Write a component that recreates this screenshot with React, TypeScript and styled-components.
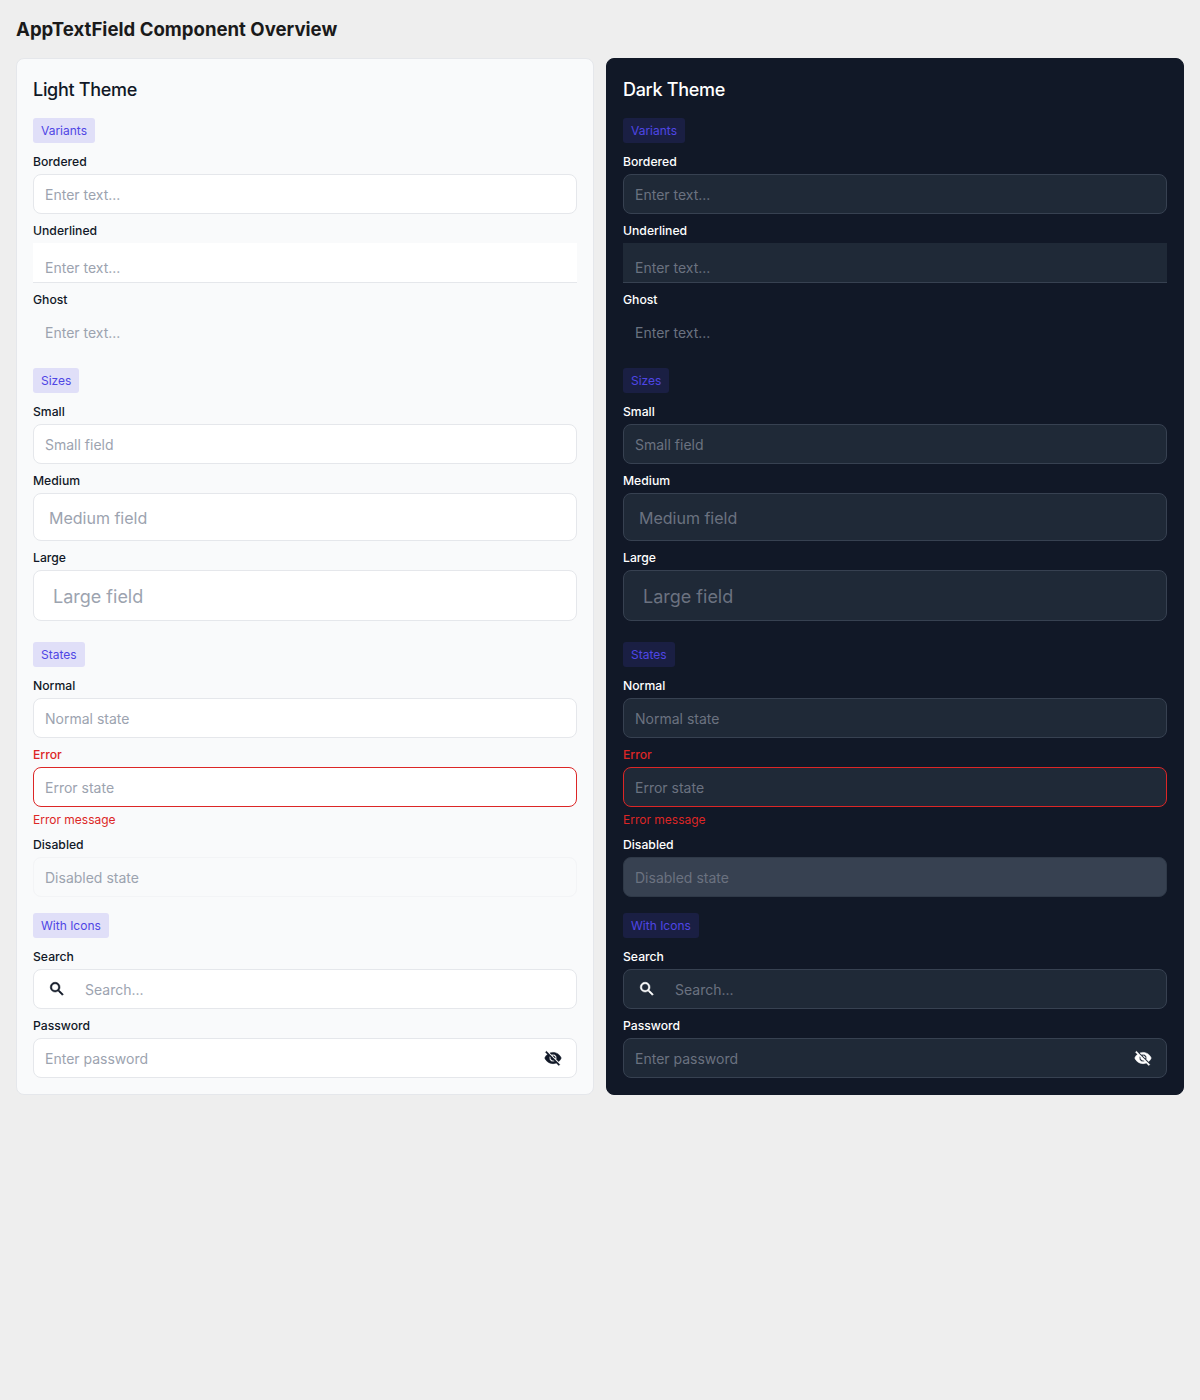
import React from "react";
import styled, { createGlobalStyle } from "styled-components";
import { MdSearch, MdVisibilityOff } from "react-icons/md";

const GlobalStyle = createGlobalStyle`
  body {
    margin: 0;
    background: #eeeeee;
    font-family: "Inter", "Noto Sans", sans-serif;
  }
`;

const Page = styled.main`
  min-height: 1400px;
  padding: 16px;
  box-sizing: border-box;
`;

const PageTitle = styled.h1`
  margin: 0 0 16px;
  font-size: 18.6px;
  line-height: 26px;
  font-weight: 700;
  color: #1a1a1a;
`;

const Columns = styled.div`
  display: grid;
  grid-template-columns: 1fr 1fr;
  gap: 12px;
`;

const Card = styled.section<{ $dark?: boolean }>`
  box-sizing: border-box;
  padding: 16px;
  border: 1px solid ${(p) => (p.$dark ? "#111827" : "#e5e7eb")};
  border-radius: 8px;
  background: ${(p) => (p.$dark ? "#111827" : "#f9fafb")};
  color: ${(p) => (p.$dark ? "#ffffff" : "#111827")};
`;

const CardTitle = styled.h2`
  margin: 0 0 15px;
  padding-top: 1px;
  font-size: 18px;
  line-height: 27px;
  font-weight: 500;
  letter-spacing: -0.3px;
`;

const Section = styled.div<{ $gap?: number }>`
  display: flex;
  flex-direction: column;
  margin-bottom: ${(p) => p.$gap ?? 16}px;

  &:last-child {
    margin-bottom: 0;
  }
`;

const Badge = styled.span<{ $dark?: boolean }>`
  align-self: flex-start;
  margin-bottom: 10px;
  padding: 0 8px;
  height: 25px;
  line-height: 25px;
  border-radius: 3px;
  font-size: 12px;
  font-weight: 400;
  color: #4f46e5;
  background: ${(p) => (p.$dark ? "#1a1f43" : "#e0dff8")};
`;

const Field = styled.div`
  display: flex;
  flex-direction: column;
  margin-bottom: 8px;

  &:last-child {
    margin-bottom: 0;
  }
`;

const Label = styled.label<{ $error?: boolean }>`
  margin-bottom: 4px;
  font-size: 12.2px;
  line-height: 17px;
  font-weight: 500;
  color: ${(p) => (p.$error ? "#dc2626" : "inherit")};
`;

const ErrorText = styled.span`
  margin-top: 5px;
  font-size: 12px;
  line-height: 16px;
  color: #dc2626;
`;

type Variant = "bordered" | "underlined" | "ghost";
type Size = "small" | "medium" | "large";

const sizes = {
  small: { height: 40, pad: 11, font: 14 },
  medium: { height: 48, pad: 15, font: 16 },
  large: { height: 51, pad: 19, font: 18 },
};

const InputBox = styled.div<{
  $dark?: boolean;
  $variant: Variant;
  $size: Size;
  $error?: boolean;
  $disabled?: boolean;
}>`
  display: flex;
  align-items: center;
  box-sizing: border-box;
  height: ${(p) => sizes[p.$size].height}px;
  padding: ${(p) => (p.$variant === "underlined" ? "10px" : "0")} ${(p) => sizes[p.$size].pad}px 0;
  border-radius: ${(p) => (p.$variant === "underlined" ? "0" : "8px")};
  border: 1px solid
    ${(p) => {
      if (p.$error) return "#dc2626";
      if (p.$variant === "ghost") return "transparent";
      if (p.$disabled) return p.$dark ? "#2f3948" : "#f3f4f6";
      return p.$dark ? "#374151" : "#e5e7eb";
    }};
  ${(p) =>
    p.$variant === "underlined" &&
    `border-width: 0 0 1px; padding-left: ${sizes[p.$size].pad + 1}px;`}
  background: ${(p) => {
    if (p.$variant === "ghost") return "transparent";
    if (p.$disabled) return p.$dark ? "#374151" : "#f9fafb";
    return p.$dark ? "#1f2937" : "#ffffff";
  }};
  color: ${(p) => (p.$dark ? "#ffffff" : "#111827")};
`;

const Input = styled.input<{ $size: Size; $dark?: boolean }>`
  flex: 1;
  min-width: 0;
  padding: ${(p) => (p.$size === "small" ? "0" : "1px 0 0")};
  border: 0;
  outline: 0;
  background: transparent;
  font-family: inherit;
  font-size: ${(p) => sizes[p.$size].font}px;
  color: inherit;

  &::placeholder {
    opacity: 1;
    color: ${(p) => (p.$dark ? "#6b7280" : "#9ca3af")};
  }
`;

const LeadIcon = styled(MdSearch)`
  flex: none;
  width: 18px;
  height: 18px;
  margin: 0 19px 0 3px;

  path:not([fill="none"]) {
    stroke: currentColor;
    stroke-width: 0.7px;
  }
`;

const TrailIcon = styled(MdVisibilityOff)`
  flex: none;
  width: 18px;
  height: 18px;
  margin-right: 3px;

  path:not([fill="none"]) {
    stroke: currentColor;
    stroke-width: 0.7px;
  }
`;

type FieldProps = {
  dark?: boolean;
  label: string;
  placeholder: string;
  variant?: Variant;
  size?: Size;
  error?: string;
  isError?: boolean;
  disabled?: boolean;
  lead?: boolean;
  trail?: boolean;
};

const TextField = ({
  dark,
  label,
  placeholder,
  variant = "bordered",
  size = "small",
  error,
  isError,
  disabled,
  lead,
  trail,
}: FieldProps) => (
  <Field>
    <Label $error={isError}>{label}</Label>
    <InputBox
      $dark={dark}
      $variant={variant}
      $size={size}
      $error={isError}
      $disabled={disabled}
    >
      {lead && <LeadIcon />}
      <Input $size={size} $dark={dark} placeholder={placeholder} disabled={disabled} />
      {trail && <TrailIcon />}
    </InputBox>
    {error && <ErrorText>{error}</ErrorText>}
  </Field>
);

const ThemeColumn = ({ dark }: { dark?: boolean }) => (
  <Card $dark={dark}>
    <CardTitle>{dark ? "Dark Theme" : "Light Theme"}</CardTitle>

    <Section>
      <Badge $dark={dark}>Variants</Badge>
      <TextField dark={dark} label="Bordered" placeholder="Enter text..." />
      <TextField dark={dark} label="Underlined" placeholder="Enter text..." variant="underlined" />
      <TextField dark={dark} label="Ghost" placeholder="Enter text..." variant="ghost" />
    </Section>

    <Section $gap={21}>
      <Badge $dark={dark}>Sizes</Badge>
      <TextField dark={dark} label="Small" placeholder="Small field" />
      <TextField dark={dark} label="Medium" placeholder="Medium field" size="medium" />
      <TextField dark={dark} label="Large" placeholder="Large field" size="large" />
    </Section>

    <Section>
      <Badge $dark={dark}>States</Badge>
      <TextField dark={dark} label="Normal" placeholder="Normal state" />
      <TextField dark={dark} label="Error" placeholder="Error state" isError error="Error message" />
      <TextField dark={dark} label="Disabled" placeholder="Disabled state" disabled />
    </Section>

    <Section>
      <Badge $dark={dark}>With Icons</Badge>
      <TextField dark={dark} label="Search" placeholder="Search..." lead />
      <TextField dark={dark} label="Password" placeholder="Enter password" trail />
    </Section>
  </Card>
);

export default function App() {
  return (
    <Page>
      <GlobalStyle />
      <PageTitle>AppTextField Component Overview</PageTitle>
      <Columns>
        <ThemeColumn />
        <ThemeColumn dark />
      </Columns>
    </Page>
  );
}
